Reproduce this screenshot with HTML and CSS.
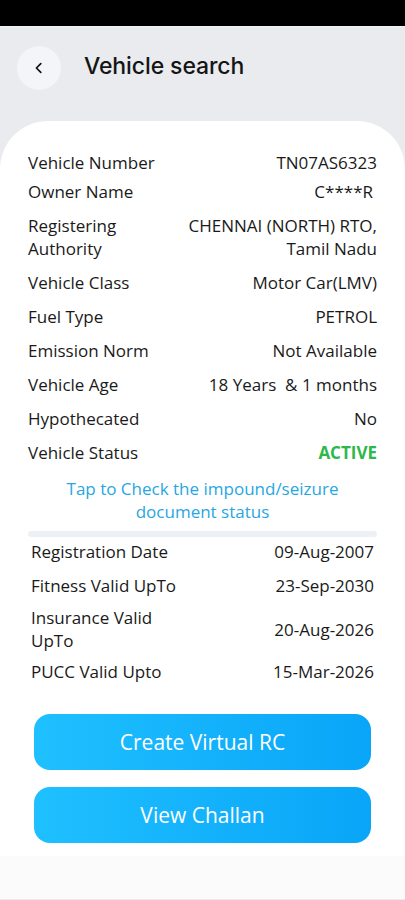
FILE: index.html
```html
<!DOCTYPE html>
<html lang="en">
  <head>
    <meta charset="UTF-8" />
    <title>Vehicle search</title>
    <meta name="viewport" content="width=device-width, initial-scale=1.0" />
    <link rel="stylesheet" href="styles.css">
  </head>
  <body>
    <div class="statusbar"></div>
    <div class="header">
      <button class="back" aria-label="Back">
        <svg width="14" height="14" viewBox="0 0 14 14">
          <path d="M8.8 2.6 L4.4 7 L8.8 11.4" fill="none" stroke="#111" stroke-width="1.7" stroke-linecap="round" stroke-linejoin="round" />
        </svg>
      </button>
      <h1>Vehicle search</h1>
    </div>

    <div class="card">
      <div class="details">
        <div class="row tight"><span class="label">Vehicle Number</span><span class="value">TN07AS6323</span></div>
        <div class="row"><span class="label">Owner Name</span><span class="value owner">C****R</span></div>
        <div class="row"><span class="label">Registering<br />Authority</span><span class="value">CHENNAI (NORTH) RTO,<br />Tamil Nadu</span></div>
        <div class="row"><span class="label">Vehicle Class</span><span class="value">Motor Car(LMV)</span></div>
        <div class="row"><span class="label">Fuel Type</span><span class="value">PETROL</span></div>
        <div class="row"><span class="label">Emission Norm</span><span class="value">Not Available</span></div>
        <div class="row"><span class="label">Vehicle Age</span><span class="value">18 Years &nbsp;&amp; 1 months</span></div>
        <div class="row"><span class="label">Hypothecated</span><span class="value">No</span></div>
        <div class="row"><span class="label">Vehicle Status</span><span class="value active">ACTIVE</span></div>
      </div>

      <a class="seizure" href="#">Tap to Check the impound/seizure<br />document status</a>

      <div class="divider"></div>

      <div class="details dates">
        <div class="row"><span class="label">Registration Date</span><span class="value">09-Aug-2007</span></div>
        <div class="row"><span class="label">Fitness Valid UpTo</span><span class="value">23-Sep-2030</span></div>
        <div class="row wrap"><span class="label">Insurance Valid<br />UpTo</span><span class="value">20-Aug-2026</span></div>
        <div class="row"><span class="label">PUCC Valid Upto</span><span class="value">15-Mar-2026</span></div>
      </div>

      <div class="actions">
        <button class="action">Create Virtual RC</button>
        <button class="action">View Challan</button>
      </div>
    </div>
    <div class="footer"></div>
  </body>
</html>
```

FILE: styles.css
```css
* {
  box-sizing: border-box;
}

body {
  margin: 0;
  font-family: "Open Sans", "Noto Sans", sans-serif;
  background: #e9ebee;
  color: #1a1a1a;
  width: 405px;
}

.statusbar {
  height: 27px;
  background: #000;
  border-bottom: 1px solid #f2f3f5;
}

.header {
  display: flex;
  align-items: center;
  gap: 23px;
  padding: 19px 17px 31px;
}

.back {
  width: 44px;
  height: 44px;
  border-radius: 50%;
  border: none;
  background: #f3f5f8;
  display: flex;
  align-items: center;
  justify-content: center;
  padding: 0;
  cursor: pointer;
}

h1 {
  margin: 0 0 4px;
  font-family: "Inter", sans-serif;
  font-size: 23px;
  font-weight: 500;
  color: #151515;
  letter-spacing: -0.1px;
}

.card {
  background: #fff;
  border-radius: 48px 48px 0 0;
  padding: 30px 28px 12px;
  min-height: 735px;
}

.details {
  display: flex;
  flex-direction: column;
  gap: 11px;
}

.row {
  display: flex;
  justify-content: space-between;
  align-items: center;
  font-size: 17px;
  line-height: 23px;
}

.row.tight {
  margin-bottom: -5px;
}

.row.wrap {
  margin: -2px 0 -3px;
}

.value {
  text-align: right;
}

.owner {
  padding-right: 4px;
}

.active {
  color: #2db84b;
  font-weight: 700;
}

.seizure {
  display: block;
  text-align: center;
  color: #27a7e2;
  text-decoration: none;
  font-size: 17px;
  line-height: 23px;
  margin-top: 13px;
}

.divider {
  height: 6px;
  background: #edf1f5;
  border-radius: 3px;
  margin: 8px 0 3px;
}

.dates {
  padding: 0 3px;
}

.actions {
  display: flex;
  flex-direction: column;
  gap: 17px;
  padding: 31px 6px 0;
}

.action {
  height: 56px;
  border: none;
  border-radius: 16px;
  background: linear-gradient(90deg, #1fc0ff, #09a5f8);
  color: #fff;
  font-family: "Open Sans", sans-serif;
  font-size: 21px;
  cursor: pointer;
}

.footer {
  height: 43px;
  background: #fbfbfb;
}
```
